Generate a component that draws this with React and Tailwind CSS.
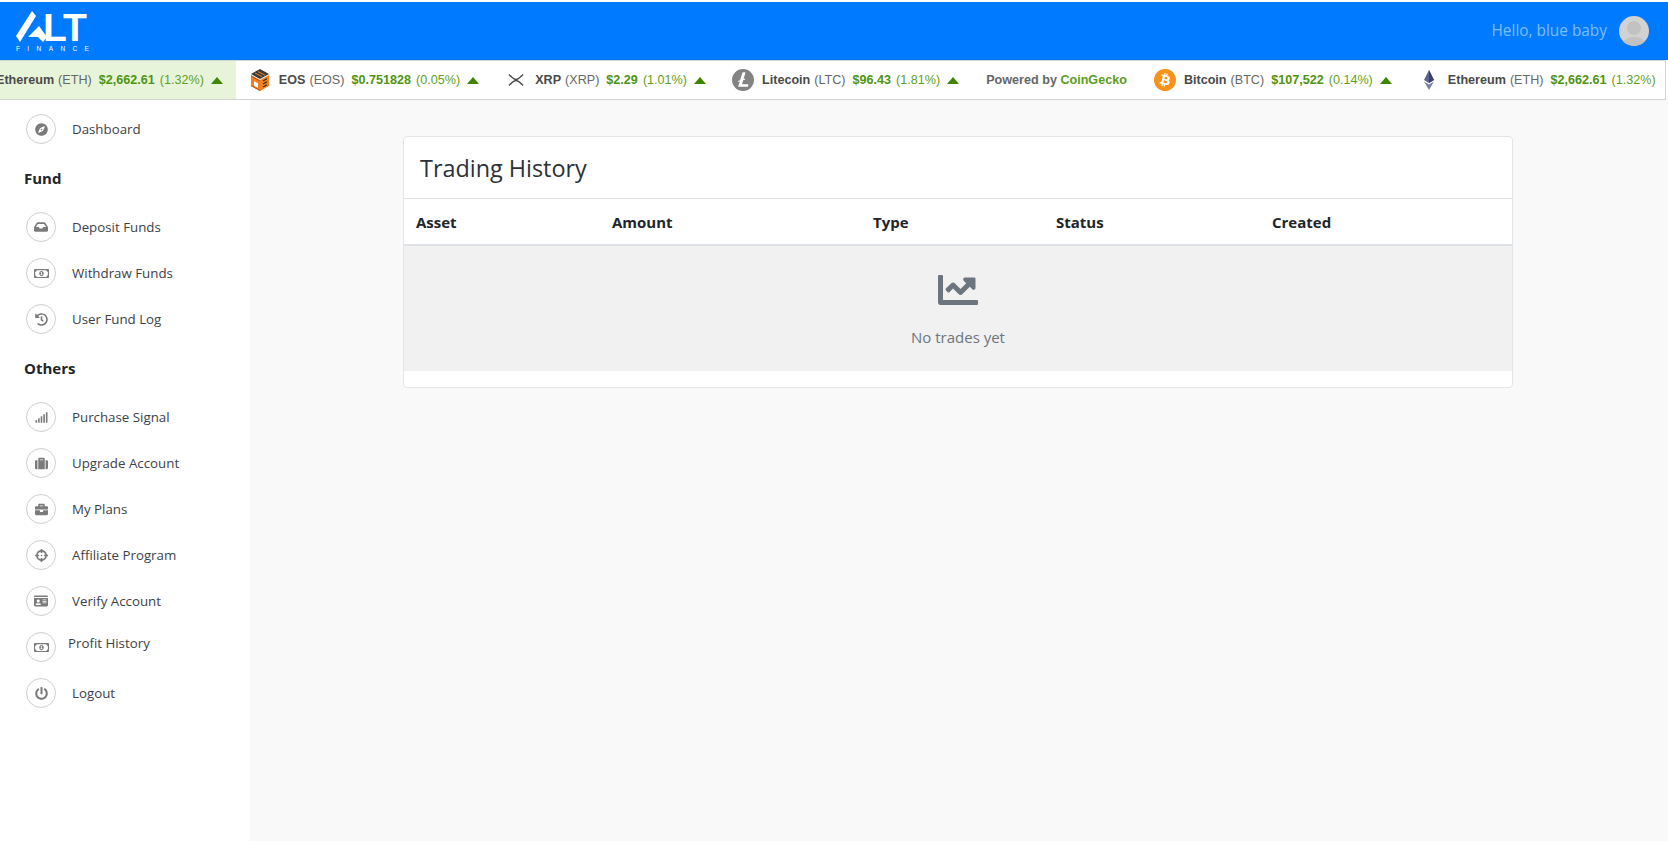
import {
    FaCompass, FaInbox, FaRegMoneyBillAlt, FaHistory, FaSignal, FaSuitcase,
    FaBriefcase, FaCrosshairs, FaIdCard, FaPowerOff, FaChartLine
} from "react-icons/fa";
import { SiBitcoin, SiLitecoin } from "react-icons/si";

function Logo() {
    return (
        <div className="relative w-[76px] h-[42px] font-['Liberation_Sans',sans-serif]">
            <svg width="34" height="34" viewBox="0 0 34 34" className="absolute left-0 top-0">
                <polygon points="17,1 21,6 5,32 1,26" fill="#fff" />
                <polygon points="13,27 24,16 32,27 28,32 23,27" fill="#fff" />
            </svg>
            <span className="absolute left-[28px] top-[3px] text-white font-bold text-[39px] leading-[30px] tracking-[-1px]">LT</span>
            <span className="absolute left-[1px] top-[36px] text-white text-[6.5px] leading-[6px] tracking-[7.4px]">FINANCE</span>
        </div>
    );
}

function EosIcon() {
    return (
        <svg width="22" height="24" viewBox="0 0 22 24">
            <polygon points="11,12 20,7 20,18 11,23" fill="#f58220" />
            <polygon points="2,7 11,12 11,23 2,18" fill="#f47b20" />
            <polygon points="11,1 20,6 11,11 2,6" fill="#3a3a3a" />
            <path d="M6 5l7 3.6M9 3.6l7 3.6" stroke="#f58220" strokeWidth="1" />
            <polygon points="5,13 9,15.2 9,20 5,17.8" fill="#fff" />
            <path d="M2 8l9 5M2 17.6l9 5" stroke="#c2560f" strokeWidth="1" />
            <path d="M14 13l4-2.2M14 16l4-2.2M14 19l4-2.2" stroke="#2e2e2e" strokeWidth="1.2" />
        </svg>
    );
}

function XrpIcon() {
    return (
        <svg width="22" height="22" viewBox="0 0 22 22" fill="none" stroke="#4a4a4a" strokeWidth="1.5">
            <path d="M4 5.5c3 2.8 4.6 4.9 7 4.9s4-2.1 7-4.9" />
            <path d="M4 16.5c3-2.8 4.6-4.9 7-4.9s4 2.1 7 4.9" />
        </svg>
    );
}

function EthIcon() {
    return (
        <svg width="22" height="22" viewBox="0 0 22 22">
            <polygon points="11,1 16,11 11,14 6,11" fill="#5d6291" />
            <polygon points="11,1 16,11 11,14" fill="#3d416e" />
            <polygon points="11,15.5 16,12.5 11,21 6,12.5" fill="#7b80ad" />
        </svg>
    );
}

function CoinItem({ icon, name, symbol, price, change, highlight, first, last }) {
    return (
        <div className={`flex items-center h-full px-[13px] shrink-0 ${highlight ? "bg-[#e8f4da]" : ""} ${first ? "-ml-[47px]" : ""}`}>
            <span className="w-[22px] h-[22px] mr-2 flex items-center justify-center shrink-0">{icon}</span>
            <span className="pt-[1px] font-bold text-[#4a4a4a]">{name}</span>
            <span className="pt-[1px] ml-1 text-[#676767]">({symbol})</span>
            <span className="pt-[1px] ml-[7px] font-bold text-[#4f9410]">{price}</span>
            <span className="pt-[1px] ml-[5px] text-[#5f9f23]">({change})</span>
            {!last && (
                <span className="ml-[7px] w-0 h-0 border-x-[6px] border-b-[7px] border-x-transparent border-b-[#3f8600]"></span>
            )}
        </div>
    );
}

function Ticker() {
    return (
        <div className="w-[1666px] h-[40px] bg-white border-y border-r border-[#d3d3d3] flex overflow-hidden whitespace-nowrap text-[12.6px] font-['Liberation_Sans',Arial,sans-serif]">
            <CoinItem first highlight icon={<EthIcon />} name="Ethereum" symbol="ETH" price="$2,662.61" change="1.32%" />
            <CoinItem icon={<EosIcon />} name="EOS" symbol="EOS" price="$0.751828" change="0.05%" />
            <CoinItem icon={<XrpIcon />} name="XRP" symbol="XRP" price="$2.29" change="1.01%" />
            <CoinItem icon={<SiLitecoin size={22} color="#838383" />} name="Litecoin" symbol="LTC" price="$96.43" change="1.81%" />
            <div className="flex items-center pt-[1px] px-[14px] shrink-0 font-bold text-[#666]">
                Powered by&nbsp;<span className="text-[#5a9e1b]">CoinGecko</span>
            </div>
            <CoinItem icon={<SiBitcoin size={22} color="#f7931a" />} name="Bitcoin" symbol="BTC" price="$107,522" change="0.14%" />
            <CoinItem last icon={<EthIcon />} name="Ethereum" symbol="ETH" price="$2,662.61" change="1.32%" />
        </div>
    );
}

function NavItem({ icon: Icon, label, size = 13, raised }) {
    return (
        <a className="flex items-center h-[46px] pl-[26px] cursor-pointer">
            <span className="w-[30px] h-[30px] rounded-full border border-[#cfcfcf] flex items-center justify-center text-[#7b7b7b] shrink-0">
                <Icon size={size} />
            </span>
            <span className={`text-[13.3px] text-[#3d4248] ${raised ? "ml-3 mb-[7px]" : "ml-4 pt-[2px]"}`}>{label}</span>
        </a>
    );
}

function NavHeading({ children }) {
    return (
        <div className="pl-[24px] h-[52px] flex items-center text-[15px] font-bold text-[#212529]">{children}</div>
    );
}

function Sidebar() {
    return (
        <aside className="w-[250px] shrink-0 bg-white pt-[6px]">
            <NavItem icon={FaCompass} label="Dashboard" />
            <NavHeading>Fund</NavHeading>
            <NavItem icon={FaInbox} label="Deposit Funds" size={14} />
            <NavItem icon={FaRegMoneyBillAlt} label="Withdraw Funds" size={15} />
            <NavItem icon={FaHistory} label="User Fund Log" />
            <NavHeading>Others</NavHeading>
            <NavItem icon={FaSignal} label="Purchase Signal" />
            <NavItem icon={FaSuitcase} label="Upgrade Account" />
            <NavItem icon={FaBriefcase} label="My Plans" />
            <NavItem icon={FaCrosshairs} label="Affiliate Program" />
            <NavItem icon={FaIdCard} label="Verify Account" size={14} />
            <NavItem icon={FaRegMoneyBillAlt} label="Profit History" size={15} raised />
            <NavItem icon={FaPowerOff} label="Logout" />
        </aside>
    );
}

function TradingHistory() {
    return (
        <div className="w-[1110px] ml-[153px] mt-[36px] h-[252px] bg-white border border-[#e3e6e9] rounded-[4px] flex flex-col overflow-hidden">
            <div className="h-[62px] pt-[2px] border-b border-[#e0e3e6] flex items-center pl-4 text-[23.4px] text-[#2c3136]">
                Trading History
            </div>
            <div className="h-[47px] pt-[2px] border-b-2 border-[#dee2e6] grid grid-cols-[196px_261px_183px_216px_1fr] items-center pl-3 text-[15px] font-bold text-[#212529]">
                <div>Asset</div>
                <div>Amount</div>
                <div>Type</div>
                <div>Status</div>
                <div>Created</div>
            </div>
            <div className="h-[125px] bg-[#f1f1f2] flex flex-col items-center pt-[24px] text-[#6c757d]">
                <FaChartLine size={40} />
                <div className="mt-[16px] text-[15px]">No trades yet</div>
            </div>
        </div>
    );
}

export default function App() {
    return (
        <div className="h-[841px] bg-white overflow-hidden pt-[2px] font-['Open_Sans','Noto_Sans',sans-serif]">
            <header className="h-[58px] bg-[#007bff] flex items-center justify-between pl-[15px] pr-[19px]">
                <Logo />
                <div className="flex items-center">
                    <span className="mb-[1px] text-[15.4px] text-white/50">Hello, blue baby</span>
                    <span className="ml-3 w-[30px] h-[30px] rounded-full bg-[#d2d2d2] overflow-hidden flex items-center justify-center">
                        <svg width="30" height="30" viewBox="0 0 30 30">
                            <circle cx="15" cy="12" r="7" fill="#c2c2c2" />
                            <path d="M2 30c2-7 8-9 13-9s11 2 13 9z" fill="#c2c2c2" />
                        </svg>
                    </span>
                </div>
            </header>
            <Ticker />
            <div className="flex h-[741px]">
                <Sidebar />
                <main className="flex-1 bg-[#f9f9f9]">
                    <TradingHistory />
                </main>
            </div>
        </div>
    );
}
